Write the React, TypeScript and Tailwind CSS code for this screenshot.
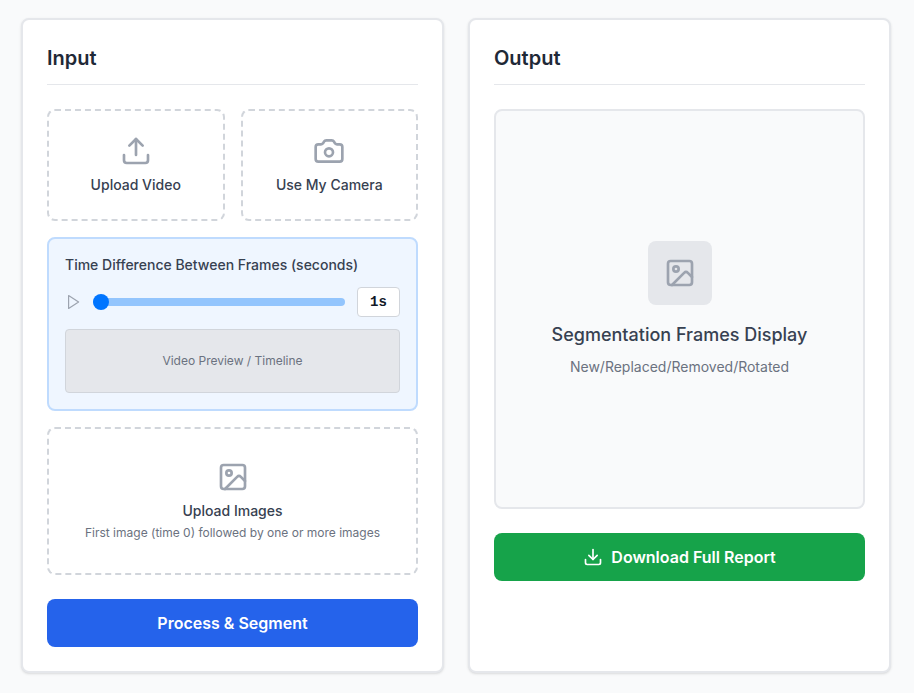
import { Camera, Download, Image, Upload } from "lucide-react";

export default function App() {
  return (
    <div className="min-h-[693px] bg-[#f9fafb] pt-[18px] pb-[20px] pl-[21px] pr-[23px] font-['Inter',sans-serif] [font-optical-sizing:none]">
      <div className="grid h-[655px] grid-cols-2 gap-6">
        {/* Input */}
        <section className="rounded-lg border-2 border-[#e5e7eb] bg-white p-6 shadow-sm">
          <h2 className="mb-6 border-b border-[#e5e7eb] pb-3 text-xl font-semibold text-[#1f2937]">Input</h2>

          <div className="grid grid-cols-2 gap-4">
            <button className="flex flex-col items-center rounded-lg border-2 border-dashed border-[#d1d5db] p-6">
              <Upload className="mb-2 h-8 w-8 text-[#9ca3af]" />
              <span className="text-sm font-medium text-[#374151]">Upload Video</span>
            </button>
            <button className="flex flex-col items-center rounded-lg border-2 border-dashed border-[#d1d5db] p-6">
              <Camera className="mb-2 h-8 w-8 text-[#9ca3af]" />
              <span className="text-sm font-medium text-[#374151]">Use My Camera</span>
            </button>
          </div>

          <div className="mt-4 rounded-lg border-2 border-[#bfdbfe] bg-[#eff6ff] p-4">
            <label className="mb-3 block text-sm font-medium text-[#374151]">
              Time Difference Between Frames (seconds)
            </label>
            <div className="flex items-center gap-3">
              <svg className="h-4 w-4 flex-none text-[#9ca3af]" viewBox="0 0 16 16" fill="none" stroke="currentColor" strokeWidth="1.2">
                <path d="M3.6 1.6 13.6 8 3.6 14.4z" strokeLinejoin="round" />
              </svg>
              <div className="flex h-2 flex-1 items-center rounded-full bg-[#93c5fd]">
                <div className="h-4 w-4 rounded-full bg-[#0075ff]" />
              </div>
              <div className="flex h-[30px] w-[43px] items-center justify-center rounded border border-[#d1d5db] bg-white font-['Liberation_Mono',monospace] text-sm font-bold text-[#111827]">
                1s
              </div>
            </div>
            <div className="mt-3 flex h-16 items-center justify-center rounded border border-[#d1d5db] bg-[#e5e7eb] text-xs text-[#6b7280]">
              Video Preview / Timeline
            </div>
          </div>

          <button className="mt-4 flex w-full flex-col items-center rounded-lg border-2 border-dashed border-[#d1d5db] p-8">
            <Image className="mb-2 h-8 w-8 text-[#9ca3af]" />
            <span className="text-sm font-medium text-[#374151]">Upload Images</span>
            <span className="mt-1 text-xs text-[#6b7280]">First image (time 0) followed by one or more images</span>
          </button>

          <button className="mt-6 h-12 w-full rounded-lg bg-[#2563eb] font-semibold text-white">Process &amp; Segment</button>
        </section>

        {/* Output */}
        <section className="rounded-lg border-2 border-[#e5e7eb] bg-white p-6 shadow-sm">
          <h2 className="mb-6 border-b border-[#e5e7eb] pb-3 text-xl font-semibold text-[#1f2937]">Output</h2>

          <div className="flex h-[400px] flex-col items-center justify-center rounded-lg border-2 border-[#e5e7eb] bg-[#f9fafb]">
            <div className="mb-4 flex h-16 w-16 items-center justify-center rounded-lg bg-[#e5e7eb]">
              <Image className="h-8 w-8 text-[#9ca3af]" />
            </div>
            <h3 className="mb-2 text-lg font-medium text-[#374151]">Segmentation Frames Display</h3>
            <p className="text-sm text-[#6b7280]">New/Replaced/Removed/Rotated</p>
          </div>

          <button className="mt-6 flex h-12 w-full items-center justify-center gap-2 rounded-lg bg-[#16a34a] font-semibold text-white">
            <Download className="h-5 w-5" />
            Download Full Report
          </button>
        </section>
      </div>
    </div>
  );
}
